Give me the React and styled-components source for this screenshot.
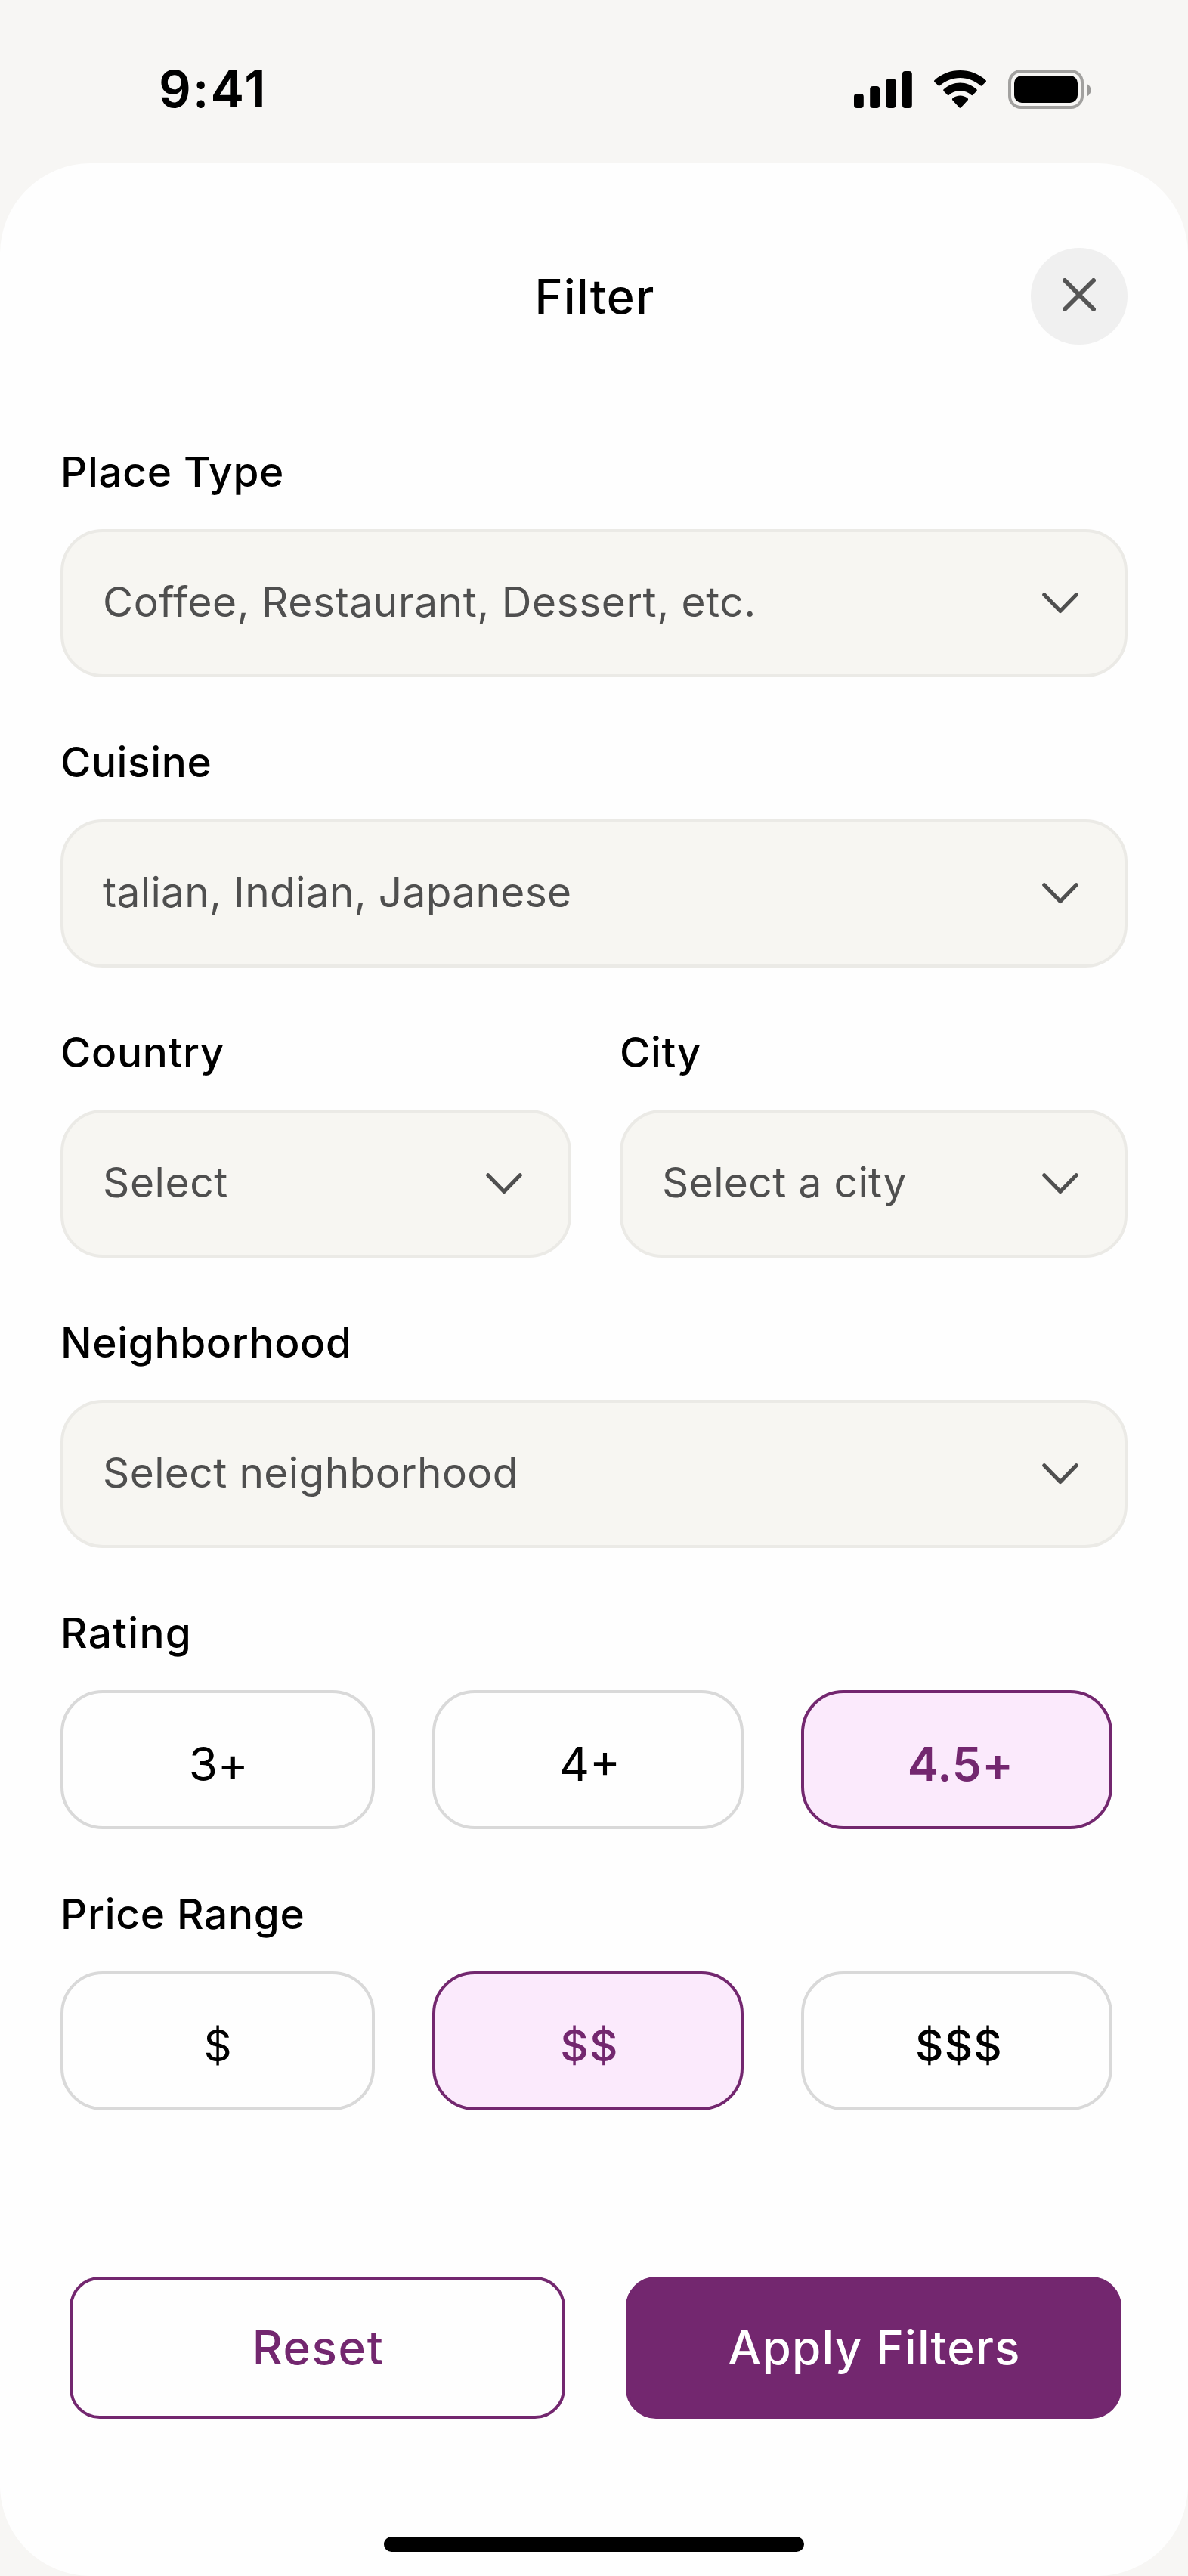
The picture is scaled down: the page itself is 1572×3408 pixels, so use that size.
import React from "react";
import styled, { createGlobalStyle } from "styled-components";

const colors = {
  page: "#f7f6f4",
  sheet: "#fefefe",
  ink: "#000000",
  muted: "#4f4f4f",
  field: "#f7f6f2",
  fieldBorder: "#ebeae6",
  chipBorder: "#d9d9d9",
  accent: "#73276f",
  accentSoft: "#fbeafc",
};

const GlobalStyle = createGlobalStyle`
  *, *::before, *::after { box-sizing: border-box; }
  body { margin: 0; background: ${colors.page}; }
  button { font: inherit; color: inherit; margin: 0; padding: 0; border: 0; background: none; }
`;

const Screen = styled.div`
  display: flex;
  flex-direction: column;
  width: 1572px;
  height: 3408px;
  background: ${colors.page};
  color: ${colors.ink};
  font-family: Inter, "Liberation Sans", sans-serif;
`;

const StatusBar = styled.header`
  display: flex;
  align-items: center;
  justify-content: space-between;
  height: 216px;
  padding: 20px 128px 0 210px;
`;

const Clock = styled.span`
  padding-bottom: 1px;
  font-size: 67px;
  font-weight: 600;
  line-height: 80px;
  letter-spacing: 2.2px;
`;

const StatusIcons = styled.div`
  display: flex;
  align-items: center;
  gap: 29px;

  svg { display: block; }
`;

const Sheet = styled.main`
  display: flex;
  flex-direction: column;
  flex: 1;
  padding: 112px 80px 32px;
  border-radius: 120px;
  background: ${colors.sheet};
`;

const TitleBar = styled.div`
  display: grid;
  grid-template-columns: 128px 1fr 128px;
  align-items: center;
`;

const Title = styled.h1`
  grid-column: 2;
  margin: 0;
  padding-left: 2px;
  text-align: center;
  font-size: 63px;
  font-weight: 500;
  line-height: 80px;
  letter-spacing: 1.2px;
`;

const CloseButton = styled.button`
  display: flex;
  align-items: center;
  justify-content: center;
  width: 128px;
  height: 128px;
  padding-bottom: 4px;
  border-radius: 50%;
  background: #f0f0f0;
`;

const Form = styled.div`
  display: flex;
  flex-direction: column;
  gap: 76px;
  margin-top: 132px;
`;

const FieldGroup = styled.div`
  display: flex;
  flex-direction: column;
  gap: 40px;
`;

const FieldRow = styled.div`
  display: grid;
  grid-template-columns: 676px 672px;
  gap: 64px;
`;

const Label = styled.span`
  font-size: 55px;
  font-weight: 500;
  line-height: 72px;
  letter-spacing: ${(p) => p.$tracking}px;
  white-space: nowrap;
`;

const SelectBox = styled.button`
  display: flex;
  align-items: center;
  justify-content: space-between;
  height: 196px;
  padding: 0 61px 0 52px;
  border: 4px solid ${colors.fieldBorder};
  border-radius: 56px;
  background: ${colors.field};
  color: ${colors.muted};

  svg { display: block; }
`;

const Placeholder = styled.span`
  padding-bottom: 4px;
  font-size: 55px;
  line-height: 72px;
  letter-spacing: ${(p) => p.$tracking}px;
  white-space: nowrap;
`;

const ChipRow = styled.div`
  display: grid;
  grid-template-columns: 416px 412px 412px;
  gap: 76px;
`;

const Chip = styled.button`
  display: flex;
  align-items: center;
  justify-content: center;
  height: 184px;
  padding: 11px 0 0 ${(p) => p.$indent || 0}px;
  border: 4px solid ${(p) => (p.$selected ? colors.accent : colors.chipBorder)};
  border-radius: 56px;
  background: ${(p) => (p.$selected ? colors.accentSoft : "transparent")};
  color: ${(p) => (p.$selected ? colors.accent : colors.ink)};
  font-size: ${(p) => p.$size || 62}px;
  font-weight: ${(p) => p.$weight || 400};
  line-height: 80px;
  letter-spacing: ${(p) => p.$tracking || 0}px;
`;

const Actions = styled.div`
  display: grid;
  grid-template-columns: 656px 656px;
  gap: 80px;
  margin: 220px 0 0 12px;
`;

const ActionButton = styled.button`
  height: 188px;
  padding-left: 2px;
  border: 4px solid ${colors.accent};
  border-radius: 40px;
  background: ${(p) => (p.$primary ? colors.accent : "transparent")};
  color: ${(p) => (p.$primary ? "#ffffff" : colors.accent)};
  font-size: 62px;
  font-weight: 500;
  line-height: 80px;
  letter-spacing: ${(p) => (p.$primary ? 1.2 : 1.6)}px;
`;

const HomeIndicator = styled.div`
  align-self: center;
  width: 556px;
  height: 20px;
  margin-top: auto;
  border-radius: 10px;
  background: ${colors.ink};
`;

const SignalIcon = () => (
  <svg width="77" height="49" viewBox="0 0 77 49">
    <rect x="0" y="30" width="12.8" height="19" rx="4" />
    <rect x="21.2" y="20" width="12.8" height="29" rx="4" />
    <rect x="42.6" y="10" width="12.8" height="39" rx="4" />
    <rect x="64" y="0" width="12.8" height="49" rx="4" />
  </svg>
);

const WifiIcon = () => (
  <svg width="69" height="50" viewBox="0 0 17.142 12.4">
    <path d="M8.5713 2.46628C11.0584 2.46639 13.4504 3.38847 15.2529 5.04195C15.3887 5.16964 15.6056 5.16803 15.7393 5.03834L17.0368 3.77487C17.1045 3.70911 17.1422 3.62004 17.1417 3.52735C17.1411 3.43467 17.1023 3.34603 17.0338 3.28104C12.3028 -1.09368 4.83907 -1.09368 0.108056 3.28104C0.0395 3.34598 0.0006 3.4346 0 3.52728C-0.0006 3.61996 0.037 3.70906 0.104689 3.77487L1.40255 5.03834C1.53615 5.16823 1.75327 5.16983 1.88893 5.04195C3.69167 3.38836 6.08395 2.46628 8.5713 2.46628Z" />
    <path d="M8.5713 6.68656C9.92527 6.68647 11.2341 7.19821 12.2403 8.12234C12.3763 8.2535 12.5907 8.25065 12.7234 8.11594L14.0106 6.79682C14.0784 6.72752 14.116 6.63348 14.115 6.53571C14.1141 6.43795 14.0748 6.34466 14.0057 6.27671C10.9418 3.37757 6.20077 3.37757 3.13685 6.27671C3.0677 6.34466 3.0284 6.438 3.0275 6.5358C3.0266 6.6336 3.0642 6.7276 3.132 6.79682L4.4192 8.11594C4.5519 8.25065 4.7663 8.2535 4.9023 8.12234C5.9078 7.1988 7.2157 6.6871 8.5713 6.68656Z" />
    <path d="M11.09 9.79C11.16 9.72 11.2 9.63 11.2 9.53C11.2 9.43 11.16 9.34 11.09 9.27C9.63 8.02 7.51 8.02 6.05 9.27C5.98 9.34 5.94 9.43 5.94 9.53C5.94 9.63 5.98 9.72 6.05 9.79L8.33 12.26C8.47 12.4 8.67 12.4 8.81 12.26Z" />
  </svg>
);

const BatteryIcon = () => (
  <svg width="110" height="52" viewBox="0 0 110 52">
    <rect x="2" y="2" width="96" height="48" rx="15" fill="none" stroke="#a2a19f" strokeWidth="4" />
    <rect x="8" y="8" width="84" height="36" rx="10" />
    <path d="M104 19c3.3 1.4 5.5 4.6 5.5 8.25s-2.2 6.9-5.5 8.25z" fill="#9b9a98" />
  </svg>
);

const CloseIcon = () => (
  <svg width="44" height="44" viewBox="0 0 44 44" fill="none" stroke="#555555" strokeWidth="6" strokeLinecap="round">
    <path d="M3 3 41 41M41 3 3 41" />
  </svg>
);

const ChevronIcon = () => (
  <svg width="48" height="28" viewBox="0 0 48 28" fill="none" stroke={colors.muted} strokeWidth="5.2" strokeLinecap="round" strokeLinejoin="round">
    <path d="M2.8 2.8 24 24.5 45.2 2.8" />
  </svg>
);

const SelectField = ({ label, labelTracking, placeholder, tracking }) => (
  <FieldGroup>
    <Label $tracking={labelTracking}>{label}</Label>
    <SelectBox type="button">
      <Placeholder $tracking={tracking}>{placeholder}</Placeholder>
      <ChevronIcon />
    </SelectBox>
  </FieldGroup>
);

const ChipField = ({ label, labelTracking, options }) => (
  <FieldGroup>
    <Label $tracking={labelTracking}>{label}</Label>
    <ChipRow>
      {options.map((o) => (
        <Chip
          key={o.text}
          type="button"
          $selected={o.selected}
          $weight={o.weight}
          $tracking={o.tracking}
          $indent={o.indent}
          $size={o.size}
        >
          {o.text}
        </Chip>
      ))}
    </ChipRow>
  </FieldGroup>
);

const ratings = [
  { text: "3+", tracking: -0.3, indent: 2 },
  { text: "4+", indent: 5 },
  { text: "4.5+", selected: true, weight: 600, tracking: 0.4, indent: 10 },
];

const prices = [
  { text: "$", size: 58 },
  { text: "$$", selected: true, weight: 500, size: 58, tracking: 1.2, indent: 4 },
  { text: "$$$", size: 58, weight: 450, tracking: 1.2, indent: 6 },
];

export default function App() {
  return (
    <Screen>
      <GlobalStyle />
      <StatusBar>
        <Clock>9:41</Clock>
        <StatusIcons>
          <SignalIcon />
          <WifiIcon />
          <BatteryIcon />
        </StatusIcons>
      </StatusBar>
      <Sheet>
        <TitleBar>
          <Title>Filter</Title>
          <CloseButton type="button" aria-label="Close">
            <CloseIcon />
          </CloseButton>
        </TitleBar>
        <Form>
          <SelectField label="Place Type" labelTracking={0.65} placeholder="Coffee, Restaurant, Dessert, etc." tracking={0.57} />
          <SelectField label="Cuisine" labelTracking={0.6} placeholder="talian, Indian, Japanese" tracking={0.33} />
          <FieldRow>
            <SelectField label="Country" labelTracking={0.7} placeholder="Select" tracking={0.6} />
            <SelectField label="City" labelTracking={0.6} placeholder="Select a city" tracking={0.4} />
          </FieldRow>
          <SelectField label="Neighborhood" labelTracking={0.65} placeholder="Select neighborhood" tracking={0.4} />
          <ChipField label="Rating" labelTracking={1.3} options={ratings} />
          <ChipField label="Price Range" labelTracking={0.7} options={prices} />
        </Form>
        <Actions>
          <ActionButton type="button">Reset</ActionButton>
          <ActionButton type="button" $primary>Apply Filters</ActionButton>
        </Actions>
        <HomeIndicator />
      </Sheet>
    </Screen>
  );
}
